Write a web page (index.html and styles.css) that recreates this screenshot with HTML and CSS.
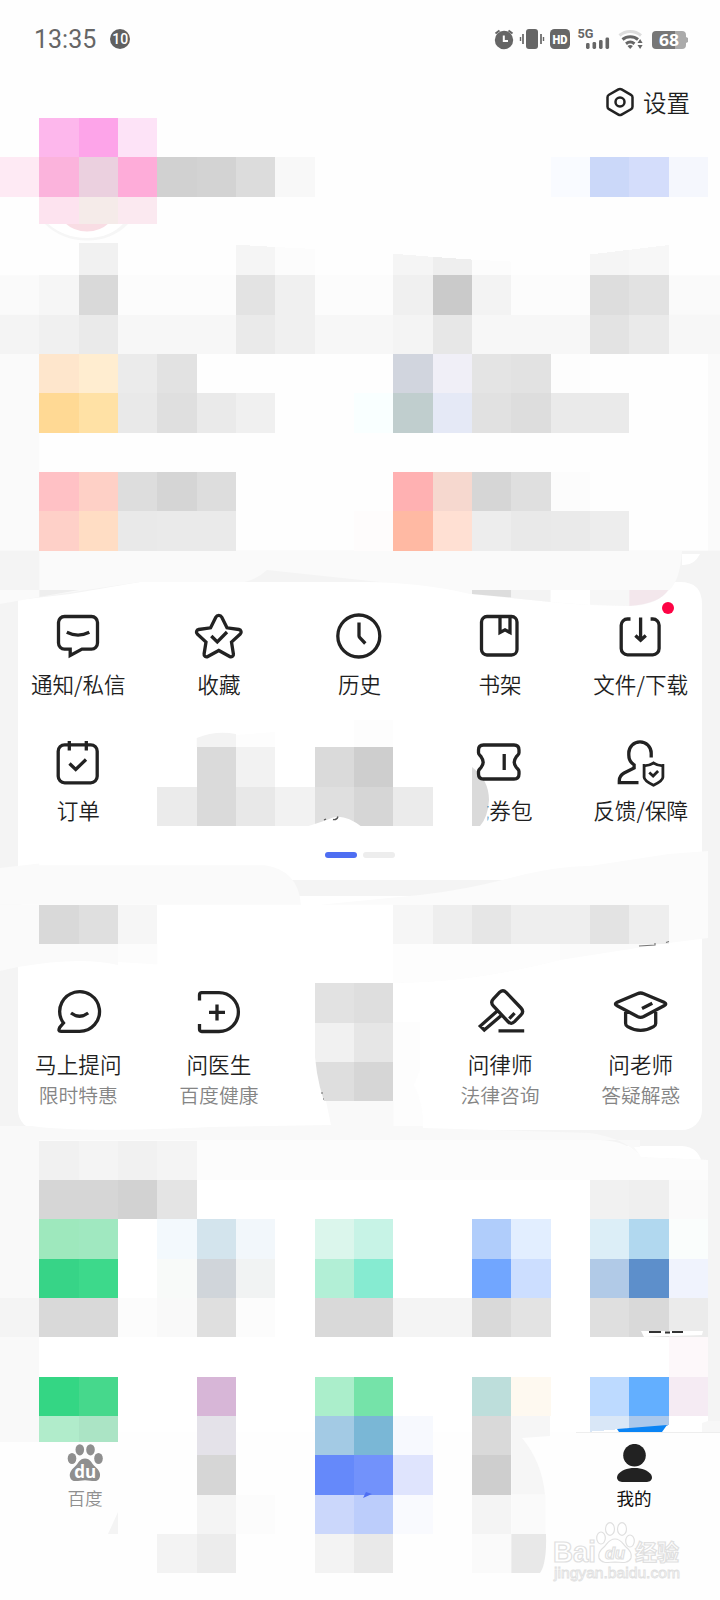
FILE: index.html
```html
<!DOCTYPE html>
<html lang="zh-CN">
<head>
<meta charset="utf-8">
<title>我的</title>
<link rel="stylesheet" href="styles.css">
</head>
<body>
<div class="phone">
  <header class="status">
    <span class="time">13:35</span>
    <span class="count">10</span>
    <svg class="signals" width="200" height="28" viewBox="492 25 200 28">
      <g fill="#666">
        <circle cx="504" cy="40" r="9.2"/>
        <path d="M495.500 33.500l4-3M512.500 33.500l-4-3" stroke="#666" stroke-width="2"/>
        <path d="M503.800 35.500V41H508" stroke="#fff" stroke-width="2" fill="none"/>
        <rect x="526" y="29" width="12" height="20" rx="3"/>
        <path d="M523 34v10M541 34v10" stroke="#666" stroke-width="1.700"/><path d="M520.500 37v4M543.500 37v4" stroke="#666" stroke-width="1.400"/>
        <rect x="550" y="29" width="20" height="20" rx="4.500"/>
        <text x="560" y="43.500" class="hd" text-anchor="middle" textLength="15" lengthAdjust="spacingAndGlyphs">HD</text>
        <text x="577.500" y="38.400" class="five-g" textLength="16" lengthAdjust="spacingAndGlyphs">5G</text>
        <rect x="586" y="43" width="3.600" height="6" rx="1.400"/><rect x="592.500" y="42" width="3.600" height="7" rx="1.400"/><rect x="599" y="40" width="3.600" height="9" rx="1.400"/><rect x="605.500" y="37.500" width="3.600" height="11.500" rx="1.400"/>
        <path d="M619.500 35.500a16.500 16.500 0 0 1 21.500 0" fill="none" stroke="#ddd" stroke-width="3"/>
        <path d="M622.500 39.500a12 12 0 0 1 15.500 0M626 43.700a7 7 0 0 1 8.500 0" fill="none" stroke="#666" stroke-width="3"/>
        <path d="M627.500 46q2.700-2 5.400 0l-2.700 3z"/>
        <path d="M637.500 43l2.600-4 2.500 4zM637.500 45l2.600 4 2.500-4z"/>
        <path d="M656 31h20v18h-20a4 4 0 0 1-4-4V35a4 4 0 0 1 4-4z" fill="#777"/>
        <path d="M675 31h7a4 4 0 0 1 4 4v2l2 1v4l-2 1v2a4 4 0 0 1-4 4h-7z" fill="#aaa"/>
        <text x="669" y="46" class="battery" text-anchor="middle" textLength="20" lengthAdjust="spacingAndGlyphs">68</text>
      </g>
    </svg>
  </header>

  <div class="toolbar">
    <svg width="28" height="30" viewBox="0 0 28 30" fill="none" stroke="#222" stroke-width="2.500" stroke-linejoin="round">
      <path d="M12.400 2.400q1.600-.900 3.200 0L25 7.800q1.500.900 1.500 2.500v9.400q0 1.600-1.500 2.500l-9.400 5.400q-1.600.900-3.200 0L3 22.200q-1.500-.900-1.500-2.500v-9.400q0-1.600 1.500-2.500z"/>
      <circle cx="14" cy="15" r="4.500"/>
    </svg>
    <span>设置</span>
  </div>

  <section class="profile"></section>

  <section class="card tools">
    <div class="grid">
      <div class="item">
        <svg class="icon" viewBox="0 0 48 48"><path d="M10.500 4.500h27a6 6 0 0 1 6 6v20.600a6 6 0 0 1-6 6H28L16.200 43.500v-6.400h-5.700a6 6 0 0 1-6-6V10.500a6 6 0 0 1 6-6z"/><path d="M12.800 20.300q11.200 5.500 22.500 0"/></svg>
        <span class="label">通知/私信</span>
      </div>
      <div class="item">
        <svg class="icon" viewBox="0 0 48 48"><path d="M20.800 5.200a3.400 3.400 0 0 1 6 0L32 15.800l12 1.700a2.600 2.600 0 0 1 1.300 4.500L36.500 30l1.900 11.900a2.500 2.500 0 0 1-3.700 2.600L23.800 38.500l-11 6a2.500 2.500 0 0 1-3.700-2.600L11 30l-8.700-8a2.600 2.600 0 0 1 1.300-4.500l12-1.700z"/><path d="M16.300 24l6 6 9.700-10"/></svg>
        <span class="label">收藏</span>
      </div>
      <div class="item">
        <svg class="icon" viewBox="0 0 48 48"><circle cx="23.800" cy="24" r="21"/><path d="M24 10.500v13.300q0 1 .600 1.700l5.700 6"/></svg>
        <span class="label">历史</span>
      </div>
      <div class="item">
        <svg class="icon" viewBox="0 0 48 48"><rect x="5.500" y="4.500" width="35.500" height="38.500" rx="5.500"/><path d="M24 5v15.500l5-2.700 5 2.700V5"/></svg>
        <span class="label">书架</span>
      </div>
      <div class="item">
        <svg class="icon" viewBox="0 0 48 48"><path d="M13.500 7h-3a6.300 6.300 0 0 0-6.300 6.300V36.500a6.300 6.300 0 0 0 6.300 6.300h25.300a6.300 6.300 0 0 0 6.300-6.300V13.300A6.300 6.300 0 0 0 35.800 7h-2.200M23.600 5.500v22M18.400 23.500l5.200 4.800 5.200-4.800"/></svg>
        <span class="label">文件/下载</span>
        <i class="badge"></i>
      </div>
      <div class="item">
        <svg class="icon" viewBox="0 0 48 48"><rect x="4.200" y="6.800" width="39" height="38" rx="6.500"/><path d="M15.300 3v9.500M32.300 3v9.500M15.500 25.500l6.200 6 10.300-10"/></svg>
        <span class="label">订单</span>
      </div>
      <div class="item"></div>
      <div class="item"></div>
      <div class="item under">
        <svg class="icon" viewBox="0 0 48 48"><path d="M7.500 7H38q5 0 5 5v2.800q0 1.200-1.200 2.400l-1.600 1.700q-3.900 5.300 0 10.400l1.600 1.700q1.200 1.200 1.200 2.400V36q0 5-5 5H7.500q-5 0-5-5v-2.600q0-1.200 1.200-2.400l1.500-1.700q3.900-5.100 0-10.400l-1.500-1.700Q2.500 16 2.500 14.800V12q0-5 5-5z"/><path d="M28.200 16v16"/></svg>
        <span class="label voucher">优券包</span>
      </div>
      <div class="item">
        <svg class="icon" viewBox="0 0 48 48"><path d="M34.200 19.500V15a11.200 11.200 0 0 0-22.400 0v2q0 6.500 5.300 9.800V30l-10 5q-4.800 2.700-4.800 7.700v2H21.500"/><path stroke-width="2.800" d="M36.500 25q5 3 9.400 2.500v11.700q0 3.300-9.400 8.100-9.400-4.800-9.400-8.100V27.500q4.400.500 9.400-2.500z"/><path stroke-width="2.800" d="M32.300 34.500l3.800 3.500 5-5"/></svg>
        <span class="label">反馈/保障</span>
      </div>
    </div>
    <div class="pager"><i class="on"></i><i></i></div>
  </section>

  <section class="card services">
    <div class="grid">
      <div class="item">
        <svg class="icon" viewBox="0 0 48 48"><path d="M25.600 43.400a19.900 19.900 0 1 0-18.400-12.400q.700 1.800 2.300 4l-3.800 4.500q-2 3.900 1.300 3.900z"/><path d="M17 25q8.500 6.500 17.200 0"/></svg>
        <span class="label">马上提问</span><span class="sub">限时特惠</span>
      </div>
      <div class="item">
        <svg class="icon" viewBox="0 0 48 48"><path d="M4.500 12.500V6.900q0-2.200 2.200-2.200H24a19.300 19.300 0 0 1 0 38.800H6.700q-2.200 0-2.200-2.200V36M14 24.400h16M22 16.400v16"/></svg>
        <span class="label">问医生</span><span class="sub">百度健康</span>
      </div>
      <div class="item"></div>
      <div class="item">
        <svg class="icon" viewBox="0 0 48 48"><path d="M23.700 4.200q3.300-3 6.400.100L45 20q3.300 3.600 0 6.900l-6.500 6.800q-3.300 3.300-6.600-.200L17.300 17.800q-3.200-3.500.100-6.900zM20.700 23.500L4.300 38l4 4L25.300 27.500M22.500 42.800h25.700M33.300 30.600l5.300-5.500"/></svg>
        <span class="label">问律师</span><span class="sub">法律咨询</span>
      </div>
      <div class="item">
        <svg class="icon" viewBox="0 0 48 48"><path d="M20.400 5.700q3.200-1.400 6.400 0L47 14.200q3.600 1.700 0 3.600L26.800 28.500q-3.200 1.600-6.400 0L.200 17.800q-3.600-1.900 0-3.600zM8.600 22v13.500q0 2 2 3.100 13 7.700 26 0 2.100-1.100 2.100-3.100V22M25 20.500L35.300 15.300"/></svg>
        <span class="label">问老师</span><span class="sub">答疑解惑</span>
      </div>
    </div>
  </section>

  <section class="card services-more"></section>

  <nav class="nav">
    <div class="tab">
      <svg width="38" height="38" viewBox="0 0 38 38"><g fill="#8f8f8f"><ellipse cx="6" cy="14.500" rx="4.300" ry="5.600"/><ellipse cx="13.800" cy="5.800" rx="4.300" ry="5.600"/><ellipse cx="24.500" cy="5.800" rx="4.300" ry="5.600"/><ellipse cx="32.500" cy="14.500" rx="4.300" ry="5.600"/><path d="M19 14.500c-5.500 0-6.500 4.800-10 8-4.500 4-5.800 7-5 10.500 1.300 5 6 4.200 10 3.700q5-.700 10 0c4 .500 8.500 1.300 9.800-3.700.900-3.500-.300-6.500-4.800-10.500-3.600-3.200-4.500-8-10-8z"/></g><text x="19.300" y="33.700" class="du" text-anchor="middle">du</text></svg>
      <span>百度</span>
    </div>
    <div class="tab active">
      <svg width="38" height="38" viewBox="0 0 38 38" fill="#222"><circle cx="19.500" cy="11.200" r="11.300"/><path d="M19.500 24c7.500 0 14 2.700 16.500 6.500 2.500 4-.200 7.500-4 7.500H7c-3.800 0-6.500-3.500-4-7.500C5.500 26.700 12 24 19.500 24z"/></svg>
      <span>我的</span>
    </div>
  </nav>

  <svg class="mosaic" viewBox="0 0 720 1600" width="720" height="1600">
    <!-- avatar edge -->
    <path d="M45 224Q62 240.500 87 240.500T128 224z" fill="#f6f6f6"/><path d="M47 223Q64 238 87 238T124 223z" fill="#fff"/><path d="M65 223q9 8.500 22 8.500t22-8.500z" fill="#f9dde4"/>
    <!-- wide bands -->
    <path d="M0 275.300H720V354H0z" fill="#fafafa"/><path d="M0 314.700H720V354H0z" fill="#f7f7f7"/>
    <path d="M0 354H39.300V551H0zM708 354h12v197h-12z" fill="#fafafa"/>
    <path d="M0 550.700H720V606H0z" fill="#f4f4f4"/>
    <path d="M18 606V600L70 594 140 582H680Q702 582 702 604V606z" fill="#fff"/>
    <path d="M39.300 550.700H682Q680 583 667 592 655 606 628 606 590 606 550 602L470 594Q420 582 360 582H140L39.300 597 0 604V590H39.300z" fill="#fafafa"/>
    <path d="M245 582q12-3 22-12l113 12z" fill="#f4f4f4"/><path d="M682 554h18q-6 12-18 11z" fill="#fff"/>
    <path d="M39.300 590h40L39.300 597z" fill="#eee"/><path d="M472 590h39.300v7.500L472 594z" fill="#ddd"/><path d="M511.300 590h39.400v12l-39.400-4z" fill="#f3f3f3"/><path d="M550.700 590H590v15l-39.300-3z" fill="#fff"/><path d="M590 590h39.300v16L590 604.500z" fill="#f7f7f7"/><path d="M629.300 590h39q-9 14-39 16z" fill="#f3e7ec"/>
    <!-- strips around the service card -->
    <path d="M0 868L39.300 863.500V865.300H265Q298 870 301 904.700H0z" fill="#fafafa"/>
    <path d="M320 904.700L420 895Q465 890 510 878T590 866L668.700 854 708 851V938L668.700 943 560 960Q470 983 393 983V904.700z" fill="#fbfbfb"/>
    <path d="M393 944H560V960Q470 983 393 983z" fill="#fdfdfd"/>
    <path d="M0 904.700H118V965Q80 956 18 967L0 971z" fill="#fafafa"/><path d="M118 944H157.300V964.500L118 962z" fill="#fcfcfc"/>
    <path d="M0 1126H32Q80 1133 210 1127L331 1125 326 1101H393L418 1101 423 1128 590 1133Q625 1138 641 1157L708 1160V1421H640V1140H39V1442H0z" fill="#f9f9f9"/>
    <path d="M393.300 1101V1126H423Q424 1105 414 1085L420 1070V1022H393.300z" fill="#fdfdfd"/>
    <path d="M39 1140H600Q628 1141 641 1157L708 1160V1180H39z" fill="#fcfcfc"/>
    <path d="M39.300 1180H708V1432H39.300z" fill="#fff"/>
    <!-- cells, one unit per block -->
    <g transform="scale(39.3333)" shape-rendering="crispEdges">
      <path fill="#fdb7ec" d="M1 3h1v1h-1z"/><path fill="#fda4e9" d="M2 3h1v1h-1z"/><path fill="#fde3f7" d="M3 3h1v1h-1z"/>
      <path fill="#feeaf4" d="M0 4h1v1h-1z"/><path fill="#fbb3dc" d="M1 4h1v1h-1z"/><path fill="#ebd0df" d="M2 4h1v1h-1z"/><path fill="#feacd9" d="M3 4h1v1h-1z"/><path fill="#d1d1d1" d="M4 4h1v1h-1z"/><path fill="#d3d3d3" d="M5 4h1v1h-1z"/><path fill="#dcdcdc" d="M6 4h1v1h-1z"/><path fill="#f8f8f8" d="M7 4h1v1h-1z"/><path fill="#f9fbff" d="M14 4h1v1h-1z"/><path fill="#cbd8f9" d="M15 4h1v1h-1z"/><path fill="#d4ddfb" d="M16 4h1v1h-1z"/><path fill="#f5f7fd" d="M17 4h1v1h-1z"/>
      <path fill="#fde3ef" d="M1 5h1v.7h-1z"/><path fill="#f5ebe9" d="M2 5h1v.7h-1z"/><path fill="#fbe9f0" d="M3 5h1v.7h-1z"/>
      <path fill="#f1f1f1" d="M2 6.170h1v.830h-1z"/><path fill="#f5f5f5" d="M6 6.220l1 .060v.720h-1zM10 6.450l1 .080V7h-1zM15 6.470l1-.120V7h-1z"/><path fill="#fcfcfc" d="M7 6.280l1 .050V7h-1zM12 6.600l1 .050V7h-1z"/><path fill="#eee" d="M11 6.530l1 .070V7h-1z"/><path fill="#f7f7f7" d="M16 6.350l1-.120V7h-1z"/>
      <path fill="#f6f6f6" d="M1 7h1v1h-1z"/><path fill="#d9d9d9" d="M2 7h1v1h-1z"/><path fill="#fcfcfc" d="M3 7h3v1h-3zM8 7h2v1h-2zM13 7h2v1h-2z"/><path fill="#e3e3e3" d="M6 7h1v1h-1z"/><path fill="#f0f0f0" d="M7 7h1v1h-1zM10 7h1v1h-1z"/><path fill="#cacaca" d="M11 7h1v1h-1z"/><path fill="#f3f3f3" d="M12 7h1v1h-1z"/><path fill="#ddd" d="M15 7h1v1h-1z"/><path fill="#e2e2e2" d="M16 7h1v1h-1z"/>
      <path fill="#f0f0f0" d="M1 8h1v1h-1zM7 8h1v1h-1z"/><path fill="#eaeaea" d="M2 8h1v1h-1zM6 8h1v1h-1zM16 8h1v1h-1z"/><path fill="#f4f4f4" d="M0 8h1v1h-1zM10 8h1v1h-1z"/><path fill="#e7e7e7" d="M11 8h1v1h-1z"/><path fill="#e3e3e3" d="M15 8h1v1h-1z"/>
      <path fill="#fee6cc" d="M1 9h1v1h-1z"/><path fill="#ffedd0" d="M2 9h1v1h-1z"/><path fill="#ebebeb" d="M3 9h1v1h-1z"/><path fill="#e2e2e2" d="M4 9h1v1h-1zM13 9h1v1h-1z"/><path fill="#d1d5de" d="M10 9h1v1h-1z"/><path fill="#f0eff7" d="M11 9h1v1h-1z"/><path fill="#e4e4e4" d="M12 9h1v1h-1z"/><path fill="#fdfdfd" d="M14 9h1v1h-1z"/>
      <path fill="#ffd994" d="M1 10h1v1h-1z"/><path fill="#ffe1a5" d="M2 10h1v1h-1z"/><path fill="#e9e9e9" d="M3 10h1v1h-1z"/><path fill="#dfdfdf" d="M4 10h1v1h-1z"/><path fill="#eaeaea" d="M5 10h1v1h-1zM14 10h2v1h-2z"/><path fill="#f0f0f0" d="M6 10h1v1h-1z"/><path fill="#f9ffff" d="M9 10h1v1h-1z"/><path fill="#c0cece" d="M10 10h1v1h-1z"/><path fill="#e5e9f6" d="M11 10h1v1h-1z"/><path fill="#e1e1e1" d="M12 10h1v1h-1z"/><path fill="#ddd" d="M13 10h1v1h-1z"/>
      <path fill="#ffc1c5" d="M1 12h1v1h-1z"/><path fill="#fed0c6" d="M2 12h1v1h-1z"/><path fill="#ddd" d="M3 12h1v1h-1zM5 12h1v1h-1z"/><path fill="#d5d5d5" d="M4 12h1v1h-1z"/><path fill="#ffb1b2" d="M10 12h1v1h-1z"/><path fill="#f6d8cf" d="M11 12h1v1h-1z"/><path fill="#d6d6d6" d="M12 12h1v1h-1z"/><path fill="#dfdfdf" d="M13 12h1v1h-1z"/><path fill="#fcfcfc" d="M14 12h1v1h-1z"/>
      <path fill="#fed0c8" d="M1 13h1v1h-1z"/><path fill="#ffddc4" d="M2 13h1v1h-1z"/><path fill="#e9e9e9" d="M3 13h1v1h-1zM13 13h1v1h-1z"/><path fill="#eaeaea" d="M4 13h2v1h-2zM14 13h1v1h-1z"/><path fill="#fefcfc" d="M9 13h1v1h-1z"/><path fill="#ffb9a3" d="M10 13h1v1h-1z"/><path fill="#ffe0d3" d="M11 13h1v1h-1z"/><path fill="#ededed" d="M12 13h1v1h-1zM15 13h1v1h-1z"/>
      <path fill="#dadada" d="M5 19h1v2h-1zM8 19h1v1h-1z"/><path fill="#f2f2f2" d="M6 19h1v1h-1zM7 20h1v1h-1z"/><path fill="#cecece" d="M9 19h1v1h-1z"/><path fill="#ebebeb" d="M4 20h1v1h-1zM10 20h1v1h-1z"/><path fill="#e8e8e8" d="M6 20h1v1h-1z"/><path fill="#dfdfdf" d="M8 20h1v1h-1z"/><path fill="#d6d6d6" d="M9 20h1v1h-1z"/><path fill="#fdfdfd" d="M9 18.300h1v.7h-1z"/>
      <path fill="#d9d9d9" d="M1 23h1v1h-1z"/><path fill="#dfdfdf" d="M2 23h1v1h-1z"/><path fill="#f6f6f6" d="M3 23h1v1h-1zM10 23h1v1h-1z"/><path fill="#eee" d="M11 23h1v1h-1zM13 23h2v1h-2zM16 23h1v1h-1z"/><path fill="#e6e6e6" d="M12 23h1v1h-1z"/><path fill="#e3e3e3" d="M15 23h1v1h-1z"/>
      <path fill="#e2e2e2" d="M8 25h1v1h-1z"/><path fill="#dedede" d="M9 25h1v1h-1zM8 27h1v1h-1z"/><path fill="#f1f1f1" d="M8 26h1v1h-1z"/><path fill="#e6e6e6" d="M9 26h1v1h-1z"/><path fill="#d6d6d6" d="M9 27h1v1h-1z"/>
      <path fill="#f1f1f1" d="M1 29h1v1h-1zM3 29h1v1h-1z"/><path fill="#f4f4f4" d="M2 29h1v1h-1zM4 29h1v1h-1z"/>
      <path fill="#d6d6d6" d="M1 30h2v1h-2z"/><path fill="#d2d2d2" d="M3 30h1v1h-1z"/><path fill="#e4e4e4" d="M4 30h1v1h-1z"/><path fill="#f1f1f1" d="M15 30h1v1h-1z"/><path fill="#efefef" d="M16 30h1v1h-1z"/><path fill="#fafafa" d="M17 30h1v1h-1z"/>
      <path fill="#9ee8bd" d="M1 31h1v1h-1z"/><path fill="#a0e8c0" d="M2 31h1v1h-1z"/><path fill="#f3f9fd" d="M4 31h1v1h-1z"/><path fill="#d3e4ed" d="M5 31h1v1h-1z"/><path fill="#f2f7fb" d="M6 31h1v1h-1z"/><path fill="#dbf6ec" d="M8 31h1v1h-1z"/><path fill="#c7f3e6" d="M9 31h1v1h-1z"/><path fill="#b0cdfb" d="M12 31h1v1h-1z"/><path fill="#e2eeff" d="M13 31h1v1h-1z"/><path fill="#dceef7" d="M15 31h1v1h-1z"/><path fill="#b1d8ef" d="M16 31h1v1h-1z"/><path fill="#fafdfc" d="M17 31h1v1h-1z"/>
      <path fill="#37d487" d="M1 32h1v1h-1z"/><path fill="#3dd98b" d="M2 32h1v1h-1z"/><path fill="#f8faf9" d="M4 32h1v1h-1z"/><path fill="#d0d5da" d="M5 32h1v1h-1z"/><path fill="#f1f3f3" d="M6 32h1v1h-1z"/><path fill="#b2efd6" d="M8 32h1v1h-1z"/><path fill="#86ebd1" d="M9 32h1v1h-1z"/><path fill="#71a6ff" d="M12 32h1v1h-1z"/><path fill="#ccdeff" d="M13 32h1v1h-1z"/><path fill="#b1cae7" d="M15 32h1v1h-1z"/><path fill="#5d8fcb" d="M16 32h1v1h-1z"/><path fill="#f0f3fd" d="M17 32h1v1h-1z"/>
      <path fill="#f4f4f4" d="M0 33h1v1h-1zM10 33h2v1h-2z"/><path fill="#d9d9d9" d="M1 33h2v1h-2zM8 33h2v1h-2zM12 33h1v1h-1zM16 33h1v1h-1z"/><path fill="#fcfcfc" d="M3 33h1v1h-1zM6 33h1v1h-1z"/><path fill="#f9f9f9" d="M4 33h1v1h-1z"/><path fill="#dfdfdf" d="M5 33h1v1h-1zM15 33h1v1h-1z"/><path fill="#e3e3e3" d="M13 33h1v1h-1z"/><path fill="#ebebeb" d="M17 33h1v1h-1z"/>
      <path fill="#fdf8fa" d="M17 34h1v1h-1z"/>
      <path fill="#34d684" d="M1 35h1v1h-1z"/><path fill="#46d88c" d="M2 35h1v1h-1z"/><path fill="#d7b6d7" d="M5 35h1v1h-1z"/><path fill="#abeecb" d="M8 35h1v1h-1z"/><path fill="#75e3a9" d="M9 35h1v1h-1z"/><path fill="#bddedb" d="M12 35h1v1h-1z"/><path fill="#fef9f0" d="M13 35h1v1h-1z"/><path fill="#bddaff" d="M15 35h1v1h-1z"/><path fill="#63afff" d="M16 35h1v1h-1z"/><path fill="#f5ebf3" d="M17 35h1v1h-1z"/>
      <path fill="#b1eccb" d="M1 36h1v.67h-1z"/><path fill="#abe4c5" d="M2 36h1v.67h-1z"/><path fill="#e4e2e9" d="M5 36h1v1h-1z"/><path fill="#a3cae4" d="M8 36h1v1h-1z"/><path fill="#7ab7d6" d="M9 36h1v1h-1z"/><path fill="#f7f9fe" d="M10 36h1v1h-1z"/><path fill="#d9d9d9" d="M12 36h1v1h-1z"/>
      <path fill="#d9e7f7" d="M15 36h1v.31l-1 .09z"/><path fill="#aac8ec" d="M16 36h1v.24l-1 .1z"/>
      <path fill="#d6d6d6" d="M5 37h1v1h-1z"/><path fill="#6589fa" d="M8 37h1v1h-1z"/><path fill="#7292fb" d="M9 37h1v1h-1z"/><path fill="#dfe4fd" d="M10 37h1v1h-1z"/><path fill="#cecece" d="M12 37h1v1h-1z"/>
      <path fill="#f4f4f4" d="M5 38h1v1h-1zM12 38h1v1h-1z"/><path fill="#fcfcfc" d="M6 38h1v1h-1z"/><path fill="#cbd7fb" d="M8 38h1v1h-1z"/><path fill="#bccdfb" d="M9 38h1v1h-1z"/><path fill="#f9fafe" d="M10 38h1v1h-1z"/>
      <path fill="#f3f3f3" d="M4 39h1v1h-1zM8 39h1v1h-1z"/><path fill="#ececec" d="M5 39h1v1h-1z"/><path fill="#e9e9e9" d="M9 39h1v1h-1z"/><path fill="#fafafa" d="M12 39h1v1h-1z"/>
    </g>
    <!-- brushed edges -->
    <path d="M196.700 747V738Q216 730 236 734V747z" fill="#f3f3f3"/><path d="M236 735l39-3v15h-39z" fill="#fdfdfd"/>
    <path d="M305 827Q322 822 333 817.500 345 814 362 827z" fill="#fff"/><path d="M333 819.500q4 1 5-3M324 820l2-1" stroke="#555" stroke-width="1.300" fill="none"/>
    <path d="M472 767Q489 780 489 800 488 817 480 826H472z" fill="#dadada"/>
    <path d="M314 1040Q315 1075 324 1101L330 1125H312V1040z" fill="#fff"/><path d="M321 1093h2M323 1099h1" stroke="#666"/>
    <path d="M639 946l16-1v-2M666 942.500l3-1" stroke="#777" stroke-width="1.200" fill="none"/>
    <path d="M634 1147H684Q697 1148 700 1159L641 1157z" fill="#fff"/>
    <path d="M641 1331H703L702 1335 644 1337z" fill="#fff"/><path d="M649 1332h12M665 1332.500h5M672 1332h11" stroke="#333" stroke-width="2"/>
    <path d="M511.300 1416H550V1436L522 1438Q542 1462 545 1494.700H511.300z" fill="#f6f6f6"/><path d="M511.300 1494.700H545.500V1534H511.300z" fill="#fafafa"/><path d="M511.300 1534H546Q547 1563 540 1573H511.300z" fill="#e8e8e8"/>
    <path d="M617 1429L667 1425 662 1432H619z" fill="#0a84f5"/><path d="M708 1190h12v231h-12z" fill="#f4f4f4"/><path d="M708 1421h12v11h-18v-9z" fill="#f7f7f7"/>
    <path d="M576 1432.500H720" stroke="#eee"/><path d="M363 1498l3-6 6 2z" fill="#4e6ef2"/><path d="M118 1512v22h-10z" fill="#f4f4f4"/>
  </svg>

  <svg class="watermark" width="134" height="66" viewBox="550 1520 134 66">
    <g fill="#fff" stroke="#e0e0e0" stroke-width="1.200">
      <text x="553" y="1562" class="wm-main" textLength="43" lengthAdjust="spacingAndGlyphs">Bai</text>
      <ellipse cx="601" cy="1538" rx="4.300" ry="6"/><ellipse cx="610" cy="1529" rx="4.500" ry="6.300"/><ellipse cx="622" cy="1529" rx="4.500" ry="6.300"/><ellipse cx="630" cy="1541" rx="4.300" ry="6"/>
      <path d="M615 1539c-6 0-8 5-11 8-5 4-6 7-5 11 2 5 7 5 16 4 9 1 14 1 16-4 1-4 0-7-5-11-3-3-5-8-11-8z"/>
      <text x="605" y="1559" class="wm-du" textLength="20" lengthAdjust="spacingAndGlyphs">du</text>
      <text x="635" y="1560" class="wm-cn" textLength="44">经验</text>
      <text x="554" y="1578" class="wm-url" textLength="126" lengthAdjust="spacingAndGlyphs">jingyan.baidu.com</text>
    </g>
  </svg>
</div>
</body>
</html>
```
FILE: styles.css
```css
* { box-sizing: border-box; }
body { margin: 0; background: #fff; font-family: "Noto Sans CJK SC", "Noto Sans", sans-serif; font-weight: 350; color: #1f1f1f; }
.phone { position: relative; width: 720px; height: 1600px; overflow: hidden; background: #f4f4f4; display: flex; flex-direction: column; }
.status { height: 78px; flex: none; padding: 0 28px 0 34px; display: flex; align-items: center; background: #fefefe; font-family: Roboto, sans-serif; font-weight: 400; color: #666; }
.time { font-size: 25px; line-height: 28px; padding-top: 2px; }
.count { width: 20px; height: 20px; margin-left: 14px; border-radius: 50%; background: #606060; color: #fff; font-size: 14px; font-weight: 500; line-height: 20px; text-align: center; }
.signals { margin-left: auto; }
.hd { font: 900 12.500px Roboto, sans-serif; fill: #fff; }
.five-g { font: 700 13.500px Roboto, sans-serif; }
.battery { font: 700 16.500px "Open Sans", sans-serif; fill: #fff; }
.toolbar { height: 48px; flex: none; padding-right: 30px; display: flex; justify-content: flex-end; align-items: center; gap: 9px; background: #fefefe; font-size: 23.500px; line-height: 30px; }
.profile { height: 456px; flex: none; background: #fefefe; }
.card { flex: none; margin: 0 18px; border-radius: 20px; background: #fff; }
.tools { height: 298px; padding-top: 30px; border-radius: 20px 20px 0 0; }
.services { height: 234px; margin-top: 16px; padding-top: 92px; }
.services-more { height: 286px; margin-top: 16px; border-radius: 20px 20px 0 0; }
.grid { margin: 0 -9px 0 -10px; display: grid; grid-template-columns: repeat(5, 1fr); }
.tools .grid { grid-auto-rows: 126px; }
.item { position: relative; z-index: 1; display: flex; flex-direction: column; align-items: center; }
.under { position: static; }
.icon { width: 48px; height: 48px; overflow: visible; fill: none; stroke: #222; stroke-width: 3.300px; }
.label { margin-top: 9px; font-size: 21.600px; line-height: 30px; white-space: nowrap; }
.services .label { margin-top: 13px; }
.sub { margin-top: 1px; font-size: 19.800px; line-height: 30px; color: #858585; }
.voucher { clip-path: inset(0 0 0 20px); }
.badge { position: absolute; top: -10px; left: 92px; width: 12px; height: 12px; border-radius: 50%; background: #fd0344; }
.pager { display: flex; justify-content: center; gap: 6px; margin-top: -12px; }
.pager i { width: 32px; height: 6px; border-radius: 3px; background: #ededed; }
.pager .on { background: #4e6ef2; }
.nav { height: 168px; flex: none; padding: 12px 56px 0 55px; display: flex; justify-content: space-between; background: #fefefe; }
.tab { width: 60px; display: flex; flex-direction: column; align-items: center; gap: 3px; font-size: 17.600px; line-height: 26px; color: #8f8f8f; }
.active { color: #111; font-weight: 400; }
.du { font: 700 17px "Open Sans", sans-serif; fill: #fff; }
.mosaic { position: absolute; left: 0; top: 0; }
.watermark { position: absolute; left: 550px; top: 1520px; }
.wm-main { font: 700 29px "Liberation Sans", sans-serif; }
.wm-du { font: italic 700 17px "Liberation Sans", sans-serif; }
.wm-cn { font: 700 22px "Noto Sans CJK SC", sans-serif; }
.wm-url { font: 400 14.500px "Liberation Sans", sans-serif; stroke-width: .8px; }
```
